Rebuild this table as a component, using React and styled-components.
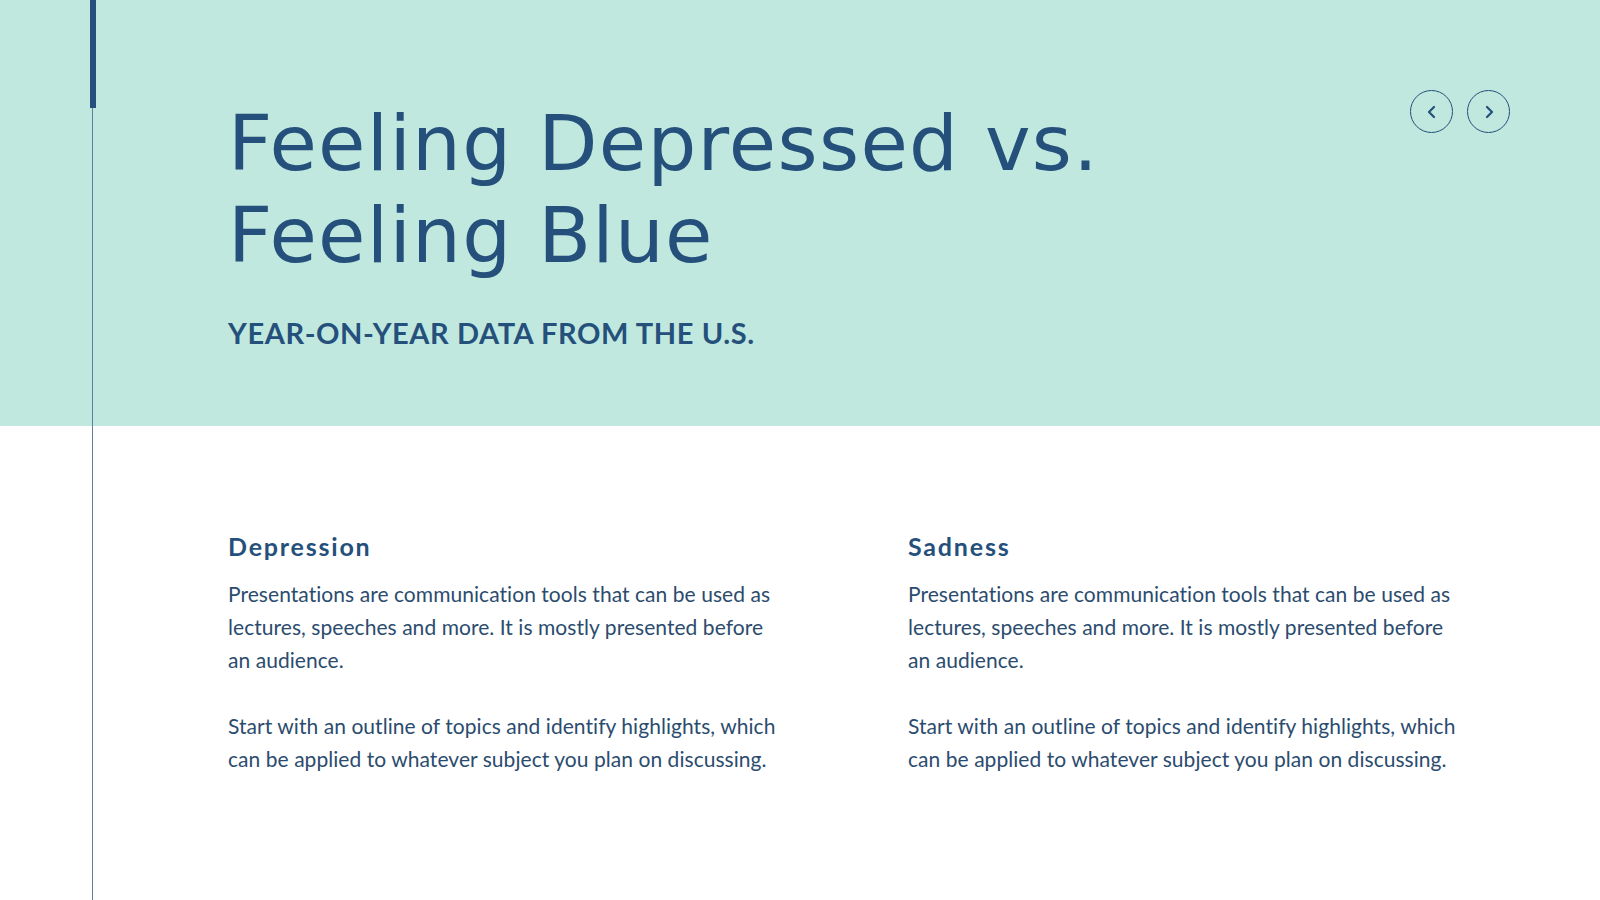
import styled, { createGlobalStyle } from "styled-components";

const Global = createGlobalStyle`
  html, body {
    margin: 0;
    padding: 0;
    background: #ffffff;
  }
  * { box-sizing: border-box; }
`;

const Pagina = styled.div`
  position: relative;
  width: 1600px;
  height: 900px;
  overflow: hidden;
  background: #ffffff;
`;

const LineaFina = styled.div`
  position: absolute;
  left: 92px;
  top: 0;
  width: 1px;
  height: 100%;
  background: #5f7f9c;
`;

const LineaGruesa = styled.div`
  position: absolute;
  left: 90px;
  top: 0;
  width: 6px;
  height: 108px;
  background: #24507b;
`;

const Banda = styled.header`
  display: flex;
  justify-content: space-between;
  align-items: flex-start;
  height: 426px;
  padding: 0 90px 0 228px;
  background: #c0e8df;
`;

const BloqueTitulo = styled.div`
  padding-top: 98px;
`;

const Titulo = styled.h1`
  margin: 0;
  font-family: "DejaVu Sans", "Liberation Sans", sans-serif;
  font-weight: normal;
  font-size: 77px;
  line-height: 92px;
  letter-spacing: 1.3px;
  color: #24507b;
`;

const Subtitulo = styled.h2`
  margin: 34px 0 0;
  font-family: Lato, "Open Sans", sans-serif;
  font-weight: 700;
  font-size: 29px;
  line-height: 1.2;
  letter-spacing: 0.6px;
  color: #24507b;
`;

const Navegacion = styled.nav`
  display: flex;
  gap: 14px;
  padding-top: 90px;
`;

const BotonFlecha = styled.button`
  display: flex;
  align-items: center;
  justify-content: center;
  width: 43px;
  height: 43px;
  padding: 0;
  border: 1.5px solid #24507b;
  border-radius: 50%;
  background: transparent;
  color: #24507b;
  cursor: pointer;
`;

const Contenido = styled.section`
  display: grid;
  grid-template-columns: 680px 600px;
  padding: 105px 0 0 228px;
`;

const Columna = styled.div`
  display: flex;
  flex-direction: column;
`;

const Encabezado = styled.h3`
  margin: 0 0 16px;
  font-family: Lato, "Open Sans", sans-serif;
  font-weight: 700;
  font-size: 25px;
  line-height: 30px;
  letter-spacing: 1.8px;
  color: #24507b;
`;

const Parrafo = styled.p`
  margin: 0 0 33px;
  font-family: Lato, "Open Sans", sans-serif;
  font-size: 21px;
  line-height: 33px;
  letter-spacing: 0.05px;
  color: #2b4c6e;
  white-space: nowrap;
`;

function Chevron({ dir }) {
  const d = dir === "left" ? "M9 2 L4 7 L9 12" : "M5 2 L10 7 L5 12";
  return (
    <svg width="14" height="14" viewBox="0 0 14 14" fill="none">
      <path d={d} stroke="currentColor" strokeWidth="2.2" strokeLinecap="round" strokeLinejoin="round" />
    </svg>
  );
}

const columnas = [
  { titulo: "Depression" },
  { titulo: "Sadness" },
];

function App() {
  return (
    <>
      <Global />
      <Pagina>
        <Banda>
          <BloqueTitulo>
            <Titulo>
              Feeling Depressed vs.<br />Feeling Blue
            </Titulo>
            <Subtitulo>YEAR-ON-YEAR DATA FROM THE U.S.</Subtitulo>
          </BloqueTitulo>
          <Navegacion>
            <BotonFlecha aria-label="Anterior"><Chevron dir="left" /></BotonFlecha>
            <BotonFlecha aria-label="Siguiente"><Chevron dir="right" /></BotonFlecha>
          </Navegacion>
        </Banda>

        <Contenido>
          {columnas.map((c) => (
            <Columna key={c.titulo}>
              <Encabezado>{c.titulo}</Encabezado>
              <Parrafo>
                Presentations are communication tools that can be used as<br />
                lectures, speeches and more. It is mostly presented before<br />
                an audience.
              </Parrafo>
              <Parrafo>
                Start with an outline of topics and identify highlights, which<br />
                can be applied to whatever subject you plan on discussing.
              </Parrafo>
            </Columna>
          ))}
        </Contenido>

        <LineaFina />
        <LineaGruesa />
      </Pagina>
    </>
  );
}

export default App;
